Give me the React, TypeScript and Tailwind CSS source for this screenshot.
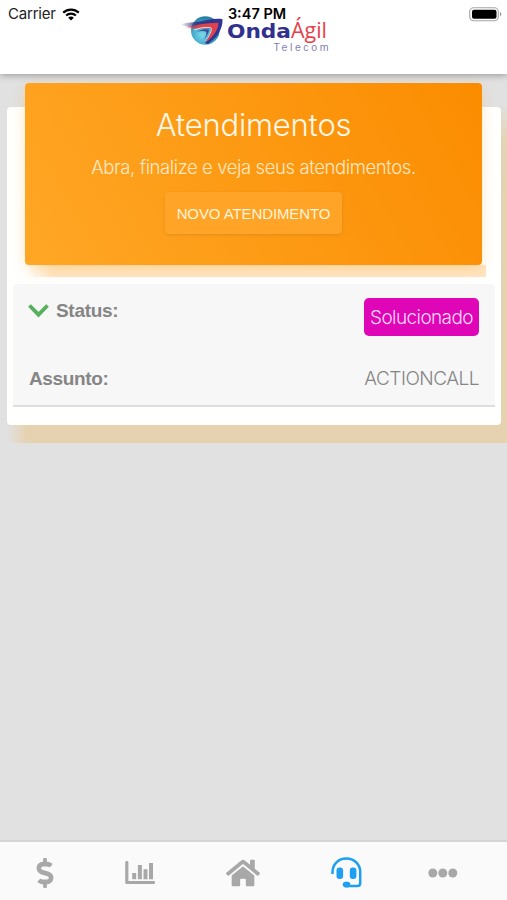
import { FaDollarSign, FaHome } from "react-icons/fa";

const Logo: React.FC = () => (
  <svg width="150" height="42" viewBox="0 0 150 42" aria-label="OndaÁgil Telecom">
    <defs>
      <radialGradient id="globe" cx="0.4" cy="0.65" r="0.6">
        <stop offset="0" stopColor="#7fd8ec" />
        <stop offset="0.6" stopColor="#3fa9cb" />
        <stop offset="1" stopColor="#2a80a8" />
      </radialGradient>
      <linearGradient id="wingBlue" x1="0" x2="1">
        <stop offset="0" stopColor="#30317f" stopOpacity="0" />
        <stop offset="0.4" stopColor="#30317f" stopOpacity="0.9" />
        <stop offset="1" stopColor="#30319a" />
      </linearGradient>
      <linearGradient id="wingRed" x1="0" x2="1">
        <stop offset="0" stopColor="#e33a44" stopOpacity="0.1" />
        <stop offset="0.4" stopColor="#e0424c" />
      </linearGradient>
    </defs>
    <circle cx="25.300" cy="19.500" r="14.300" fill="url(#globe)" />
    <path
      d="M0.500 13.500C8 11 14 11.500 20 10.500C28 9 35 7 42.500 8.200C43 17 38 26 28 33C23 33 26 29 29 24C31 20 32 18 30 17.500C22 17 10 17 0.500 13.500Z"
      fill="url(#wingBlue)"
    />
    <path
      d="M5 16C16 14.500 25 12 38.500 11.800C38.500 18 34 25 26.500 31C29 25 33 18 30.500 17C22 17 13 19.500 5 16Z"
      fill="url(#wingRed)"
    />
    <path d="M14 19C20 16.500 25 16 31 16.800C32.500 19 29 25 25.500 30.500" fill="none" stroke="#e3eef7" strokeWidth="0.9" />
    <path d="M17 20.500C22 18 26 18 29 18.500C29 21 27 25 24 29C26 25 27 22 26 20.500C23 19.500 20 20 17 20.500Z" fill="#34549a" />
    <text
      x="47"
      y="27"
      textLength="64"
      lengthAdjust="spacingAndGlyphs"
      fontFamily="DejaVu Sans, sans-serif"
      fontWeight="700"
      fontSize="20"
      fill="#30318f"
    >
      Onda
    </text>
    <text
      x="111"
      y="27"
      textLength="36"
      lengthAdjust="spacingAndGlyphs"
      fontFamily="Open Sans, sans-serif"
      fontSize="21"
      fill="#e8404a"
    >
      Ágil
    </text>
    <text
      x="93.500"
      y="39.500"
      textLength="55"
      fontFamily="Liberation Sans, sans-serif"
      fontSize="10.500"
      fill="#7f7fb4"
    >
      Telecom
    </text>
  </svg>
);

const Wifi: React.FC = () => (
  <svg width="18" height="13" viewBox="0 0 18 13" fill="none" stroke="#000">
    <path d="M1.200 4.600C5.600 0.500 12.400 0.500 16.800 4.600" strokeWidth="2.200" />
    <path d="M4.100 7.600C6.900 5 11.100 5 13.900 7.600" strokeWidth="2.100" />
    <path d="M6.200 9.700C7.800 8.200 10.200 8.200 11.800 9.700L9 12.500Z" fill="#000" stroke="none" />
  </svg>
);

const Battery: React.FC = () => (
  <svg width="33" height="15" viewBox="0 0 33 15">
    <rect x="0.700" y="0.700" width="28.600" height="13" rx="4" fill="#fff" stroke="#a5a5a5" strokeWidth="1.100" />
    <rect x="3" y="2.700" width="24.500" height="9" rx="2" fill="#000" />
    <path d="M31 5C32.700 5.600 32.700 8.800 31 9.400Z" fill="#999" />
  </svg>
);

const ChartIcon: React.FC = () => (
  <svg width="30" height="24" viewBox="0 0 30 24" fill="none" stroke="currentColor" strokeLinejoin="round">
    <path d="M1.800 1.500V21.500H28.500" strokeWidth="3.200" strokeLinecap="round" />
    <path d="M9.200 12V18.300M14.900 4V18.300M20.500 8.200V18.300M26 2V18.300" strokeWidth="4" />
  </svg>
);

const HeadsetIcon: React.FC = () => (
  <svg width="31" height="31" viewBox="0 0 31 31" fill="none">
    <path
      d="M1.500 17V15.200C1.500 7 7.500 1.500 15.200 1.500C23 1.500 29.200 7 29.200 15V26.300C29.200 28 28 29 26.500 29H15"
      stroke="currentColor"
      strokeWidth="2.500"
    />
    <rect x="5.500" y="10.500" width="6.600" height="11.500" rx="3" fill="currentColor" />
    <rect x="18.800" y="10.500" width="6.600" height="11.500" rx="3" fill="currentColor" />
    <rect x="11.800" y="24.800" width="7.500" height="5.600" rx="2.800" fill="currentColor" />
  </svg>
);

const DotsIcon: React.FC = () => (
  <svg width="30" height="10" viewBox="0 0 30 10" fill="currentColor">
    <circle cx="4.800" cy="5" r="4.500" />
    <circle cx="14.800" cy="5" r="4.500" />
    <circle cx="24.800" cy="5" r="4.500" />
  </svg>
);

const App: React.FC = () => {
  return (
    <div className="flex h-[900px] w-[507px] flex-col overflow-hidden bg-[#e1e1e1] font-['Liberation_Sans',sans-serif]">
      <header className="relative z-10 h-[74px] shrink-0 bg-white shadow-[0_1px_7px_rgba(0,0,0,0.35)]">
        <div className="flex justify-center pt-[11px] pl-[3px]">
          <Logo />
        </div>
        {/* Status bar sits on top of the logo */}
        <div className="absolute inset-x-0 top-0 flex h-7 items-center justify-between pr-[5px] pl-2 font-['Inter',sans-serif] text-[15px] text-[#222]">
          <div className="flex items-center gap-[6px]">
            <span className="tracking-[-0.2px]">Carrier</span>
            <Wifi />
          </div>
          <Battery />
          <div className="absolute inset-x-0 pl-[7px] text-center text-[14.5px] font-semibold text-black">
            3:47 PM
          </div>
        </div>
      </header>

      <main className="flex-1 pt-[33px] pl-[7px]">
        <div className="relative w-[494px]">
          {/* Warm glow below and to the right of the card */}
          <div className="absolute top-[318px] left-0 h-[18px] w-[500px] bg-linear-to-r from-[#e1e1e1] via-[#e6d2b0] via-[4%] to-[#e6d2b0]" />
          <div className="absolute top-0 left-[490px] h-[336px] w-[10px] bg-linear-to-b from-[#e1dfdc] via-[#e6d2b4] via-[10%] to-[#e6d2b0]" />

          <div className="relative h-[318px] rounded-[4px] bg-[#fffffd] px-[6px]">
            <div className="relative -top-[24px] ml-3 h-[182px] w-[457px]">
              <div className="absolute top-[182px] left-0 h-[12px] w-[461px] bg-linear-to-r from-[#ffffff] via-[#ffe5c2] via-[6%] to-[#ffe5c2]" />
              <div className="relative flex h-full flex-col items-center rounded-[4px] bg-linear-[60deg,#ffa726,#fb8c00] font-['Inter',sans-serif] font-light text-[#fff8e8] shadow-[0_4px_14px_-2px_rgba(255,152,0,0.3)]">
                <h1 className="mt-[21px] text-[31px] leading-[42px] tracking-[-0.2px] whitespace-nowrap">
                  Atendimentos
                </h1>
                <p className="mt-2 text-[18.5px] leading-[27px] tracking-[-0.4px] whitespace-nowrap text-[#ffe9c4]">
                  Abra, finalize e veja seus atendimentos.
                </p>
                <button className="mt-[11px] h-[42px] w-[177px] rounded-[4px] bg-[#ffa426] pt-[3px] font-['Liberation_Sans',sans-serif] text-[15px] tracking-[-0.1px] whitespace-nowrap text-[#fff4dc] shadow-[0_1px_3px_rgba(180,120,40,0.4)]">
                  NOVO ATENDIMENTO
                </button>
              </div>
            </div>

            <div className="-mt-[5px] h-[123px] w-[482px] rounded-t-[4px] border-b-2 border-[#dedede] bg-[#f7f7f7] pr-4 pl-4 text-[19px] text-[#858585]">
              <div className="flex items-start justify-between pt-[14px]">
                <div className="flex items-center pt-[2px]">
                  <svg width="21" height="14" viewBox="0 0 21 14" className="-ml-px" fill="none" stroke="#57b15c" strokeWidth="3.800">
                    <path d="M1.500 1.500L10.500 10.700L19.500 1.500" />
                  </svg>
                  <span className="ml-[7px] leading-[22px] font-bold tracking-[-0.3px]">Status:</span>
                </div>
                <span className="h-[38px] w-[115px] rounded-[5px] bg-[#de06b7] text-center font-['Inter',sans-serif] leading-[39px] font-light tracking-[-0.6px] whitespace-nowrap text-[#ffd9f7]">
                  Solucionado
                </span>
              </div>
              <div className="mt-[31px] flex items-center justify-between leading-6">
                <span className="font-bold tracking-[-0.35px]">Assunto:</span>
                <span className="font-['Inter',sans-serif] font-light tracking-[-0.5px]">ACTIONCALL</span>
              </div>
            </div>
          </div>
        </div>
      </main>

      <nav className="flex h-[60px] shrink-0 items-center border-t-2 border-[#d5d5d5] bg-[#fafafa] pt-[3px] pl-[36px] text-[#a8a8a8]">
        <div className="flex w-[89px]">
          <FaDollarSign className="h-[30px] w-[18px]" />
        </div>
        <div className="w-[101px]">
          <ChartIcon />
        </div>
        <div className="w-[105px]">
          <FaHome size={34} />
        </div>
        <div className="w-[97px] text-[#1e9ff2]">
          <HeadsetIcon />
        </div>
        <DotsIcon />
      </nav>
    </div>
  );
};

export default App;
